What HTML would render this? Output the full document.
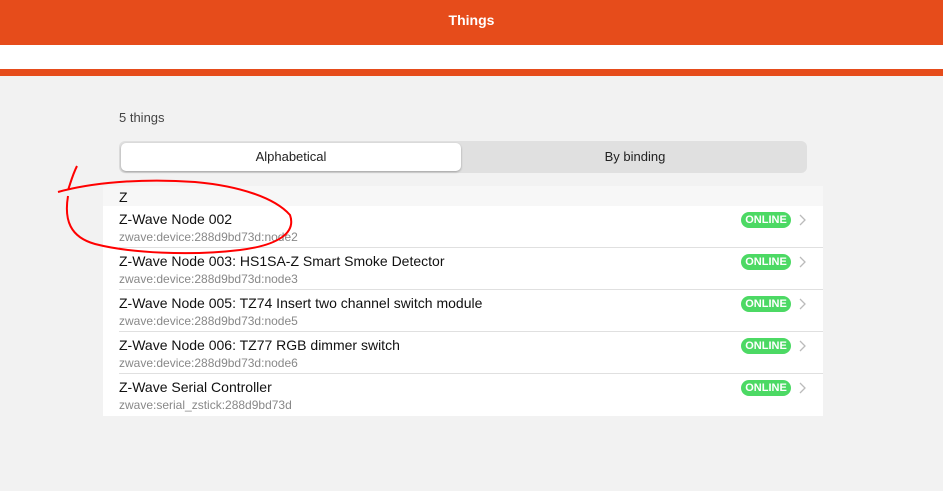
<!DOCTYPE html>
<html><head><meta charset="utf-8"><style>
body{margin:0;width:943px;height:491px;background:#f2f2f2;font-family:"Liberation Sans",sans-serif;position:relative;overflow:hidden}
.top{position:absolute;left:0;top:0;width:943px;height:45px;background:#e64c1b;color:#fff;text-align:center;line-height:40px;font-size:14px;font-weight:bold}
.white{position:absolute;left:0;top:45px;width:943px;height:24px;background:#fff}
.bar{position:absolute;left:0;top:69px;width:943px;height:7px;background:#e64c1b}
.count{position:absolute;left:119px;top:110px;font-size:13px;color:#444}
.seg{position:absolute;left:119px;top:141px;width:688px;height:32px;background:#e0e0e0;border-radius:6px}
.sel{position:absolute;left:2px;top:2px;width:340px;height:28px;background:#fff;border-radius:5px;box-shadow:0 1px 2px rgba(0,0,0,.3);text-align:center;line-height:28px;font-size:13px;color:#222}
.seg .b{position:absolute;left:344px;width:344px;top:0;line-height:32px;text-align:center;font-size:13px;color:#222}
.list{position:absolute;left:103px;top:186px;width:720px;height:230px;background:#fff}
.hdr{height:20px;background:#f7f7f7;padding-left:16px;font-size:14px;line-height:22px;color:#111}
.row{height:41px;border-bottom:1px solid #e0e0e0;margin-left:16px;position:relative}
.row:last-child{border-bottom:none}
.t{position:absolute;left:0;top:5px;font-size:14px;color:#111}
.s{position:absolute;left:0;top:24px;font-size:12px;color:#888}
.on{position:absolute;left:622px;top:6px;width:50px;height:16px;border-radius:8px;background:#4cd964;color:#fff;font-size:11px;font-weight:bold;text-align:center;line-height:16px}
.ch{position:absolute;left:680px;top:8px}
svg.a{position:absolute;left:0;top:0}
</style></head><body>
<div class="top">Things</div><div class="white"></div><div class="bar"></div>
<div class="count">5 things</div>
<div class="seg"><div class="sel">Alphabetical</div><div class="b">By binding</div></div>
<div class="list">
<div class="hdr">Z</div>
<div class="row"><div class="t">Z-Wave Node 002</div><div class="s">zwave:device:288d9bd73d:node2</div><div class="on">ONLINE</div><svg class="ch" width="8" height="12"><path d="M1 1 L6 6 L1 11" fill="none" stroke="#bbb" stroke-width="1.3"/></svg></div>
<div class="row"><div class="t">Z-Wave Node 003: HS1SA-Z Smart Smoke Detector</div><div class="s">zwave:device:288d9bd73d:node3</div><div class="on">ONLINE</div><svg class="ch" width="8" height="12"><path d="M1 1 L6 6 L1 11" fill="none" stroke="#bbb" stroke-width="1.3"/></svg></div>
<div class="row"><div class="t">Z-Wave Node 005: TZ74 Insert two channel switch module</div><div class="s">zwave:device:288d9bd73d:node5</div><div class="on">ONLINE</div><svg class="ch" width="8" height="12"><path d="M1 1 L6 6 L1 11" fill="none" stroke="#bbb" stroke-width="1.3"/></svg></div>
<div class="row"><div class="t">Z-Wave Node 006: TZ77 RGB dimmer switch</div><div class="s">zwave:device:288d9bd73d:node6</div><div class="on">ONLINE</div><svg class="ch" width="8" height="12"><path d="M1 1 L6 6 L1 11" fill="none" stroke="#bbb" stroke-width="1.3"/></svg></div>
<div class="row"><div class="t">Z-Wave Serial Controller</div><div class="s">zwave:serial_zstick:288d9bd73d</div><div class="on">ONLINE</div><svg class="ch" width="8" height="12"><path d="M1 1 L6 6 L1 11" fill="none" stroke="#bbb" stroke-width="1.3"/></svg></div>
</div>
<svg class="a" width="943" height="491"><path d="M77 166 C72 176 70 185 68 190 M58 192 C90 183 140 178 195 182 C240 186 275 198 290 215 C296 232 280 245 240 250 C190 256 130 253 95 244 C70 237 64 220 68 196" fill="none" stroke="#f00" stroke-width="2"/></svg>
</body></html>
